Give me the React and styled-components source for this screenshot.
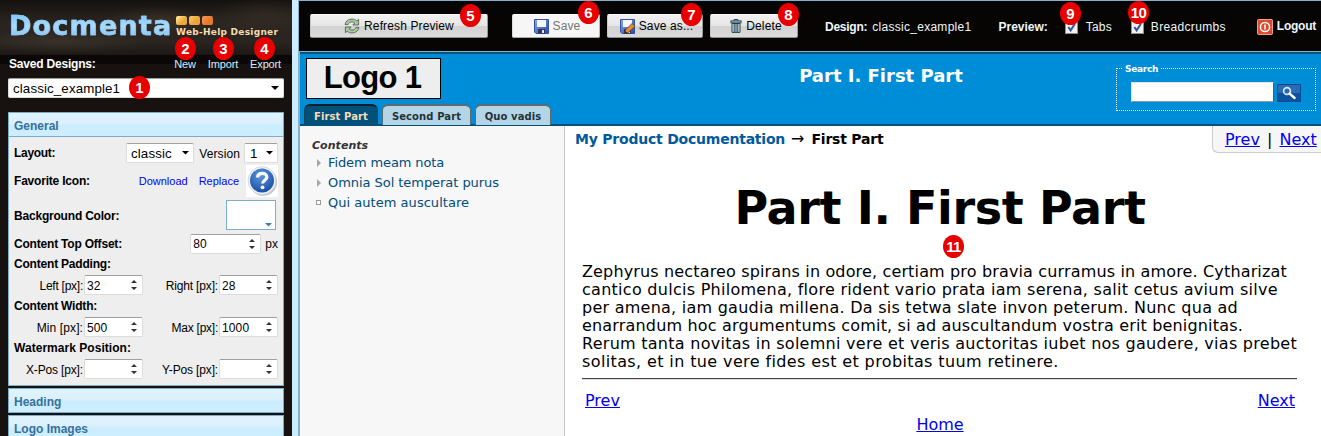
import React from 'react';
import styled, { createGlobalStyle, css } from 'styled-components';

const ARIAL = '"Liberation Sans", Arial, sans-serif';
const VERDANA = '"DejaVu Sans", Verdana, sans-serif';

const Global = createGlobalStyle`
  * { box-sizing: border-box; }
  body { margin: 0; overflow: hidden; font: 12px ${ARIAL}; color: #000; }
`;

const Page = styled.div`
  display: flex;
  width: 1321px;
  height: 436px;
  overflow: hidden;
  background: #fff;
`;

/* ---------- numbered callouts ---------- */
const Badge = styled.span`
  position: absolute;
  z-index: 5;
  left: ${p => p.$x}px;
  top: ${p => p.$y}px;
  width: 21px;
  height: 23px;
  border-radius: 50%;
  background: #e80000;
  color: #fff;
  font: bold 15px/23px ${ARIAL};
  letter-spacing: ${p => (p.$wide ? '-0.6px' : '0')};
  text-align: center;
`;

/* ---------- sidebar ---------- */
const Sidebar = styled.aside`
  position: relative;
  flex: none;
  width: 292px;
  height: 436px;
  padding: 0 8px;
  background: #17110f;
`;

const Brand = styled.div`
  display: flex;
  height: 55px;
  margin: 0 -8px;
  padding-left: 9px;
  background:
    radial-gradient(ellipse 60px 14px at 160px 20px, rgba(75, 62, 48, .5), transparent),
    radial-gradient(ellipse 90px 12px at 60px 42px, rgba(70, 62, 52, .5), transparent),
    radial-gradient(ellipse 60px 18px at 265px 16px, rgba(58, 50, 42, .6), transparent),
    linear-gradient(#15110e, #2a241f 40%, #2a2520 75%, #1d1815);
`;

const BrandName = styled.div`
  font: bold 27px/30px ${VERDANA};
  letter-spacing: 1.2px;
  padding-top: 11px;
  width: 167px;
  color: transparent;
  -webkit-text-stroke: .5px #9bd2f8;
  background: linear-gradient(#7cc6f5 14px, #a9dcff 26px, #8fc4ee 36px);
  background-clip: text;
`;

const BrandSide = styled.div`
  padding-top: 16px;
`;

const Squares = styled.div`
  display: flex;
  gap: 2px;
  height: 9px;
`;

const Square = styled.i`
  width: 11px;
  height: 9px;
  border-radius: 2px;
  background: linear-gradient(135deg, ${p => p.$from}, ${p => p.$to} 60%);
`;

const BrandSub = styled.div`
  font: bold 9px/15px ${VERDANA};
  letter-spacing: .27px;
  color: #f6dcae;
  white-space: nowrap;
`;

const SavedBar = styled.div`
  display: flex;
  align-items: center;
  height: 16px;
  margin: 0 -8px;
  padding: 2px 11px 0 9px;
  background: linear-gradient(#0a0706 9px, #17110f 9px);
  color: #fff;
  font-size: 11px;
  b { font-size: 12px; letter-spacing: -.2px; margin-right: auto; }
  span { color: #d6ecf8; margin-left: 12px; letter-spacing: -.15px; }
`;

const Field = styled.div`
  display: flex;
  align-items: center;
  justify-content: space-between;
  width: ${p => p.$w}px;
  height: 20px;
  flex: none;
  padding: 0 ${p => p.$pr ?? 5}px 0 ${p => p.$pl ?? 2}px;
  border: 1px solid #dcdcdc;
  border-top-color: #a0a0a0;
  border-radius: 2px;
  background: #fff;
  font-size: ${p => p.$size || 12}px;
  letter-spacing: .12px;
  line-height: 18px;
  span { padding-top: 1px; }
`;

const SavedSelect = styled.div`
  margin: 7px 0 14px;
  letter-spacing: .2px;
`;

const SectionHead = styled.div`
  height: 25px;
  border: 1px solid #7dadc9;
  background: linear-gradient(#e0f4ff, #dbeffc 45%, #cbedff 55%, #cdeeff);
  padding-left: 5px;
  font: bold 12px/26px ${ARIAL};
  color: #38709c;
  margin-bottom: ${p => (p.$open ? 0 : 2)}px;
`;

const SectionBody = styled.div`
  height: 249px;
  margin-bottom: 2px;
  padding: 4px 5px 0;
  border: 1px solid #7dadc9;
  border-top: 0;
  background: #eee;
`;

const Line = styled.div`
  display: flex;
  align-items: center;
  height: ${p => p.$h}px;
  white-space: nowrap;
`;

const Label = styled.b`
  margin-right: auto;
  letter-spacing: ${p => p.$ls ?? -.2}px;
`;

const Small = styled.a`
  font-size: 11px;
  color: #00f;
  margin-right: ${p => p.$mr}px;
`;

const PairLabel = styled.span`
  width: ${p => p.$w}px;
  padding: 1px ${p => p.$pr ?? 1}px 0 0;
  text-align: right;
  letter-spacing: ${p => p.$ls ?? -.15}px;
`;

const Swatch = styled.div`
  display: flex;
  align-items: flex-end;
  justify-content: flex-end;
  width: 50px;
  height: 30px;
  margin: -2px 2px 0 0;
  padding: 0 3px 2px 0;
  border: 1px solid #7dadc9;
  background: #fff;
`;

const Unit = styled.span`
  padding: 1px 0 0 4px;
`;

const Divider = styled.div`
  flex: none;
  width: 8px;
  background: #cdecff;
  border-right: 2px solid #84b0cc;
`;

/* ---------- toolbar ---------- */
const Main = styled.main`
  position: relative;
  flex: 1;
  min-width: 0;
`;

const Toolbar = styled.div`
  display: flex;
  align-items: center;
  height: 52px;
  margin-left: -1px;
  padding: 0 5px 0 11px;
  border-top: 1px solid #84b0cc;
  border-bottom: 1px solid #84b0cc;
  background: #060503;
  color: #eef6fa;
  white-space: nowrap;
`;

const Button = styled.div`
  flex: none;
  display: flex;
  align-items: center;
  justify-content: center;
  gap: 4px;
  width: ${p => p.$w}px;
  height: 24px;
  margin-right: ${p => p.$mr || 0}px;
  padding-left: ${p => p.$pl || 0}px;
  border: 1px solid #a9a9a9;
  border-color: #fafafa #9a9a9a #8e8e8e #c8c8c8;
  border-radius: 2px;
  background: linear-gradient(#f0f0f0 0, #e6e6e6 48%, #d2d2d2 52%, #dcdcdc);
  color: #000;
  line-height: 14px;
  letter-spacing: .12px;
  ${p => p.$off && css`
    background: #f6f6f6;
    border-color: #fff #bbb #aaa #ddd;
    color: #777;
  `}
`;

const ToolText = styled.span`
  flex: none;
  letter-spacing: ${p => p.$ls || 0}px;
  margin-left: ${p => p.$ml || 0}px;
  font-weight: ${p => (p.$b ? 'bold' : 'normal')};
  padding-top: ${p => p.$pt ?? 2}px;
`;

const Check = styled.div`
  flex: none;
  display: flex;
  width: 13px;
  height: 13px;
  margin: 3px 0 0 ${p => p.$ml}px;
  border: 1px solid #8e8f8f;
  background: #f1f1f1;
`;

const Logout = styled.div`
  display: flex;
  align-items: center;
  gap: 4px;
  margin-left: auto;
  font-weight: bold;
  letter-spacing: -.25px;
  svg { margin-top: 1px; }
`;

/* ---------- previewed document ---------- */
const Banner = styled.header`
  display: flex;
  height: 74px;
  border-top: 2px solid #00547c;
  border-bottom: 2px solid #00507a;
  background: #008dd8;
`;

const BannerLeft = styled.div`
  width: 320px;
  padding: 4px 0 0 4px;
`;

const LogoBox = styled.div`
  width: 135px;
  height: 41px;
  margin-left: 2px;
  padding-right: 2px;
  border: 1px solid #000;
  background: #eee;
  text-align: center;
  font: bold 31px/38px ${ARIAL};
  letter-spacing: -.7px;
`;

const Tabs = styled.div`
  display: flex;
  gap: 4px;
  margin-top: 5px;
`;

const Tab = styled.div`
  width: ${p => p.$w}px;
  height: 21px;
  border: 1px solid #5f6a6e;
  border-top-width: 2px;
  border-bottom: 0;
  border-radius: 6px 6px 0 0;
  background: #b3d5e6;
  color: #263238;
  text-align: center;
  font: bold 10px/21px ${VERDANA};
  letter-spacing: .1px;
  ${p => p.$on && css`
    border-color: #10202a #1a4560 #00507a;
    background: #00507a;
    color: #f5dcb8;
  `}
`;

const BannerTitle = styled.div`
  width: 200px;
  margin-left: 161px;
  padding-top: 9px;
  color: #fff;
  text-align: center;
  white-space: nowrap;
  font: bold 18px/25px ${VERDANA};
`;

const SearchWrap = styled.div`
  flex: 1;
  display: flex;
  justify-content: flex-end;
  padding: 8px 5px 0 0;
`;

const SearchSet = styled.fieldset`
  width: 200px;
  height: 49px;
  margin: 0;
  padding: 0 0 0 14px;
  border: 1px dotted #fff;
  color: #fff;
  legend {
    margin-left: -8px;
    padding: 1px 2px 0;
    font: bold 9px/12px ${VERDANA};
    letter-spacing: -.3px;
  }
`;

const SearchRow = styled.div`
  display: flex;
  align-items: flex-end;
  gap: 3px;
  padding-top: 7px;
`;

const SearchInput = styled.div`
  width: 143px;
  height: 20px;
  background: #fff;
  border: 1px solid;
  border-color: #dfeaf0 #4d5b63 #8d979c #dfeaf0;
`;

const SearchButton = styled.div`
  display: flex;
  align-items: center;
  justify-content: center;
  width: 24px;
  height: 18px;
  border: 1px solid #0a4c98;
  background: linear-gradient(#2d6ab5 50%, #0d529f 50%);
`;

const Body = styled.div`
  display: flex;
  height: 310px;
`;

const Toc = styled.nav`
  flex: none;
  width: 265px;
  padding: 10px 0 0 12px;
  border-right: 1px solid #c6c6c6;
  background: #f7f7f7;
`;

const TocTitle = styled.div`
  height: 17px;
  font: italic bold 11px/20px ${VERDANA};
  letter-spacing: .05px;
  color: #333;
`;

const TocItem = styled.div`
  display: flex;
  align-items: center;
  height: 20px;
  padding-left: 4px;
  font: 13px/20px ${VERDANA};
  letter-spacing: ${p => p.$ls || 0}px;
  color: #004c7a;
  svg { margin: -1px 6px 0 0; }
`;

const Content = styled.section`
  flex: 1;
  min-width: 0;
`;

const TopRow = styled.div`
  display: flex;
  justify-content: space-between;
  height: 27px;
  padding-left: 10px;
  font: bold 14px/26px ${VERDANA};
  letter-spacing: -.22px;
  a { color: #005a9c; }
  i { font: normal 16px ${VERDANA}; margin: 0 7px 0 6px; letter-spacing: 0; }
`;

const NavBox = styled.div`
  width: 109px;
  padding-left: 12px;
  border: 1px solid #ccc;
  border-width: 0 0 1px 1px;
  border-bottom-left-radius: 6px;
  background: #f6f6f6;
  font: 16px/27px ${VERDANA};
  letter-spacing: 0;
  word-spacing: 2px;
  white-space: nowrap;
`;

const Link = styled.span`
  color: #00e;
  text-decoration: underline;
`;

const Heading = styled.h1`
  margin: 25px 0 0;
  padding-right: 6px;
  height: 85px;
  text-align: center;
  font: bold 46px/60px ${VERDANA};
  letter-spacing: -.4px;
`;

const Para = styled.p`
  margin: 0 24px 0 17px;
  height: 116px;
  border-bottom: 1px solid #444;
  box-shadow: 0 1px 0 #ddd;
  font: 16px/18px ${VERDANA};
`;

const ParaLine = styled.span`
  display: block;
  white-space: nowrap;
  letter-spacing: ${p => p.$ls}px;
`;

const Footer = styled.div`
  display: grid;
  grid-template-columns: 1fr 1fr;
  margin: 10px 26px 0 20px;
  font: 16px/24px ${VERDANA};
  div:nth-child(2) { text-align: right; }
  div:nth-child(3) { grid-column: 1 / 3; text-align: center; }
`;

const Caret = ({ c = '#000', w = 8 }) => (
  <svg width={w} height={w / 2} viewBox="0 0 8 4"><path d="M0 0H8L4 4Z" fill={c} /></svg>
);
const Spin = () => (
  <svg width="6" height="12" viewBox="0 0 6 12"><path d="M0 4H6L3 1ZM0 8H6L3 11Z" fill="#333" /></svg>
);
const Spinner = ({ w, children }) => <Field $w={w}><span>{children}</span><Spin /></Field>;

const RefreshIcon = () => (
  <svg width="16" height="16" viewBox="0 0 16 16">
    <g stroke="#47594a" strokeWidth=".8" fill="#a6c9a2" strokeLinejoin="round">
      <path d="M1 6.6C1.6 3 4.6 1 8 1c2 0 3.6.7 4.8 1.9L14.6 1.2V7H8.8l1.9-2C9.9 4.2 9 3.9 8 3.9 6 3.9 4.7 4.9 4.1 6.6Z" />
      <path d="M15 9.4C14.4 13 11.4 15 8 15c-2 0-3.6-.7-4.8-1.9L1.4 14.8V9H7.2l-1.9 2c.8.8 1.7 1.1 2.7 1.1 2 0 3.3-1 3.9-2.7Z" />
    </g>
  </svg>
);
const SaveIcon = ({ pencil }) => (
  <svg width="15" height="15" viewBox="0 0 15 15">
    <defs><linearGradient id="disk" x1="0" y1="0" x2="1" y2="1"><stop offset="0" stopColor="#86a9e8" /><stop offset="1" stopColor="#2b49a8" /></linearGradient></defs>
    <path d="M.5 .5H14.5V14.5H2L.5 13Z" fill="url(#disk)" stroke="#3553a6" />
    <rect x="3" y="1" width="9" height="7" fill="#f4f8ff" />
    <rect x="4" y="10" width="7" height="4.5" fill="#27355f" />
    <rect x="8" y="11" width="2" height="3" fill="#dfe8fa" />
    {pencil && <>
      <path d="M4.5 14.5L5.5 10.8 12 4.5 15 7.3 8.4 13.6Z" fill="#e18b3c" stroke="#5d3413" strokeWidth=".7" />
      <path d="M4.5 14.5L5.2 12 7 13.7Z" fill="#222" />
    </>}
  </svg>
);
const TrashIcon = () => (
  <svg width="12" height="14" viewBox="0 0 12 14" fill="none" stroke="#26404f">
    <path d="M4 1.8V.6H8V1.8" />
    <rect x="1" y="1.9" width="10" height="2" fill="#b9d2de" />
    <path d="M2 4.5V13.4H10V4.5Z" fill="#d7e7ef" />
    <path d="M4.2 5V13M6 5V13M7.8 5V13" />
  </svg>
);
const Tick = () => (
  <svg width="11" height="11" viewBox="0 0 11 11"><path d="M2.3 5L4.6 8.4 8.8 2" fill="none" stroke="#35599b" strokeWidth="2" /></svg>
);
const LogoutIcon = () => (
  <svg width="16" height="16" viewBox="0 0 16 16">
    <rect x=".5" y=".5" width="15" height="15" rx="1" fill="#dc4a2c" stroke="#efa08a" />
    <circle cx="8" cy="8" r="4.6" fill="none" stroke="#fff" strokeWidth="1.5" />
    <path d="M8 5.6V10.4" stroke="#fff" strokeWidth="1.5" />
  </svg>
);
const MagnifierIcon = () => (
  <svg width="18" height="14" viewBox="0 0 18 14">
    <circle cx="7" cy="5" r="3.4" fill="#2b69b4" stroke="#d8ecff" strokeWidth="1.6" />
    <path d="M9.6 7.6L14.6 12" stroke="#fff" strokeWidth="2.4" strokeLinecap="round" />
  </svg>
);
const HelpIcon = () => (
  <svg width="32" height="32" viewBox="0 0 32 32">
    <defs><radialGradient id="orb" cx=".45" cy=".3" r=".7"><stop offset="0" stopColor="#5b9ade" /><stop offset="1" stopColor="#1c4fa3" /></radialGradient></defs>
    <rect width="32" height="32" fill="#fff" />
    <circle cx="17.3" cy="17" r="13.8" fill="#bfc3c8" />
    <circle cx="16" cy="15.6" r="14" fill="#e9eef4" stroke="#cfd6de" strokeWidth=".8" />
    <circle cx="16" cy="15.6" r="12" fill="url(#orb)" />
    <path d="M11.6 12.6C11.6 9.8 13.4 8.3 16.2 8.3 19 8.3 20.8 9.9 20.8 12.2 20.8 15.2 16.6 15.4 16.6 18.6" fill="none" stroke="#fff" strokeWidth="3.2" />
    <circle cx="16.5" cy="22.3" r="1.9" fill="#fff" />
  </svg>
);
const Arrow = () => <svg width="6" height="8" viewBox="0 0 6 8"><path d="M1 0L5 4L1 8Z" fill="#a3a7aa" /></svg>;
const Leaf = () => <svg width="6" height="6" viewBox="0 0 6 6"><rect x=".5" y=".5" width="4" height="4" fill="#fff" stroke="#9a9a9a" /></svg>;

const CALLOUTS = [
  [1, 129, 76], [2, 175, 37], [3, 213, 37], [4, 254, 37], [5, 460, 4], [6, 578, 1],
  [7, 681, 3], [8, 778, 3], [9, 1060, 2], [10, 1128, 1], [11, 943, 235],
];

const TEXT = [
  ['Zephyrus nectareo spirans in odore, certiam pro bravia curramus in amore. Cytharizat', .15],
  ['cantico dulcis Philomena, flore rident vario prata iam serena, salit cetus avium silve', .275],
  ['per amena, iam gaudia millena. Da sis tetwa slate invon peterum. Nunc qua ad', .251],
  ['enarrandum hoc argumentums comit, si ad auscultandum vostra erit benignitas.', .17],
  ['Rerum tanta novitas in solemni vere et veris auctoritas iubet nos gaudere, vias prebet', .27],
  ['solitas, et in tue vere fides est et probitas tuum retinere.', .38],
];

export default function App() {
  return (
    <Page>
      <Global />
      {CALLOUTS.map(([n, x, y]) => <Badge key={n} $x={x} $y={y} $wide={n > 9}>{n}</Badge>)}
      <Sidebar>
        <Brand>
          <BrandName>Docmenta</BrandName>
          <BrandSide>
            <Squares>
              <Square $from="#fff3a0" $to="#eda93a" />
              <Square $from="#fbd070" $to="#efa338" />
              <Square $from="#f4a05a" $to="#e8782a" />
            </Squares>
            <BrandSub>Web-Help Designer</BrandSub>
          </BrandSide>
        </Brand>
        <SavedBar><b>Saved Designs:</b><span>New</span><span>Import</span><span>Export</span></SavedBar>
        <SavedSelect><Field $w={276} $pl={4} $pr={4} $size={13.33}><span>classic_example1</span><Caret /></Field></SavedSelect>
        <SectionHead $open>General</SectionHead>
        <SectionBody>
          <Line $h={24}>
            <Label $ls={-.3}>Layout:</Label>
            <Field $w={68} $pl={4} $pr={4} $size={13.33}><span>classic</span><Caret w={7} /></Field>
            <PairLabel $w={50} $ls={.1} $pr={4}>Version</PairLabel>
            <Field $w={34} $pl={5} $pr={4} $size={13.33}><span>1</span><Caret w={7} /></Field>
          </Line>
          <Line $h={32}>
            <Label>Favorite Icon:</Label>
            <Small $mr={11}>Download</Small><Small $mr={7}>Replace</Small><HelpIcon />
          </Line>
          <Line $h={37}><Label>Background Color:</Label><Swatch><Caret c="#3a80b8" w={7} /></Swatch></Line>
          <Line $h={19}><Label>Content Top Offset:</Label><Spinner w={71}>80</Spinner><Unit>px</Unit></Line>
          <Line $h={22}><Label>Content Padding:</Label></Line>
          <Line $h={20}>
            <PairLabel $w={70} $ls={-.25}>Left [px]:</PairLabel><Spinner w={59}>32</Spinner>
            <PairLabel $w={76}>Right [px]:</PairLabel><Spinner w={59}>28</Spinner>
          </Line>
          <Line $h={22}><Label>Content Width:</Label></Line>
          <Line $h={20}>
            <PairLabel $w={70} $ls={.1}>Min [px]:</PairLabel><Spinner w={59}>500</Spinner>
            <PairLabel $w={76} $ls={-.25}>Max [px]:</PairLabel><Spinner w={59}>1000</Spinner>
          </Line>
          <Line $h={22}><Label $ls={.04}>Watermark Position:</Label></Line>
          <Line $h={20}>
            <PairLabel $w={70}>X-Pos [px]:</PairLabel><Spinner w={59} />
            <PairLabel $w={76}>Y-Pos [px]:</PairLabel><Spinner w={59} />
          </Line>
        </SectionBody>
        <SectionHead>Heading</SectionHead>
        <SectionHead>Logo Images</SectionHead>
      </Sidebar>
      <Divider />
      <Main>
        <Toolbar>
          <Button $w={178} $mr={24}><RefreshIcon />Refresh Preview</Button>
          <Button $w={88} $mr={7} $pl={2} $off><SaveIcon />Save</Button>
          <Button $w={96} $mr={7} $pl={3}><SaveIcon pencil />Save as...</Button>
          <Button $w={88} $pl={4}><TrashIcon />Delete</Button>
          <ToolText $b $ml={27} $ls={-.25}>Design:</ToolText>
          <ToolText $ml={5} $ls={.28}>classic_example1</ToolText>
          <ToolText $b $ml={27}>Preview:</ToolText>
          <Check $ml={17}><Tick /></Check>
          <ToolText $ml={8} $ls={.16}>Tabs</ToolText>
          <Check $ml={19}><Tick /></Check>
          <ToolText $ml={7} $ls={.33}>Breadcrumbs</ToolText>
          <Logout><LogoutIcon />Logout</Logout>
        </Toolbar>
        <Banner>
          <BannerLeft>
            <LogoBox>Logo 1</LogoBox>
            <Tabs>
              <Tab $w={74} $on>First Part</Tab>
              <Tab $w={89}>Second Part</Tab>
              <Tab $w={76}>Quo vadis</Tab>
            </Tabs>
          </BannerLeft>
          <BannerTitle>Part I. First Part</BannerTitle>
          <SearchWrap>
            <SearchSet>
              <legend>Search</legend>
              <SearchRow><SearchInput /><SearchButton><MagnifierIcon /></SearchButton></SearchRow>
            </SearchSet>
          </SearchWrap>
        </Banner>
        <Body>
          <Toc>
            <TocTitle>Contents</TocTitle>
            <TocItem $ls={-.12}><Arrow />Fidem meam nota</TocItem>
            <TocItem $ls={-.05}><Arrow />Omnia Sol temperat purus</TocItem>
            <TocItem $ls={.03}><Leaf />Qui autem auscultare</TocItem>
          </Toc>
          <Content>
            <TopRow>
              <div><a>My Product Documentation</a><i>→</i>First Part</div>
              <NavBox><Link>Prev</Link> | <Link>Next</Link></NavBox>
            </TopRow>
            <Heading>Part I. First Part</Heading>
            <Para>{TEXT.map(([t, ls]) => <ParaLine key={t} $ls={ls}>{t}</ParaLine>)}</Para>
            <Footer>
              <div><Link>Prev</Link></div>
              <div><Link>Next</Link></div>
              <div><Link>Home</Link></div>
            </Footer>
          </Content>
        </Body>
      </Main>
    </Page>
  );
}
